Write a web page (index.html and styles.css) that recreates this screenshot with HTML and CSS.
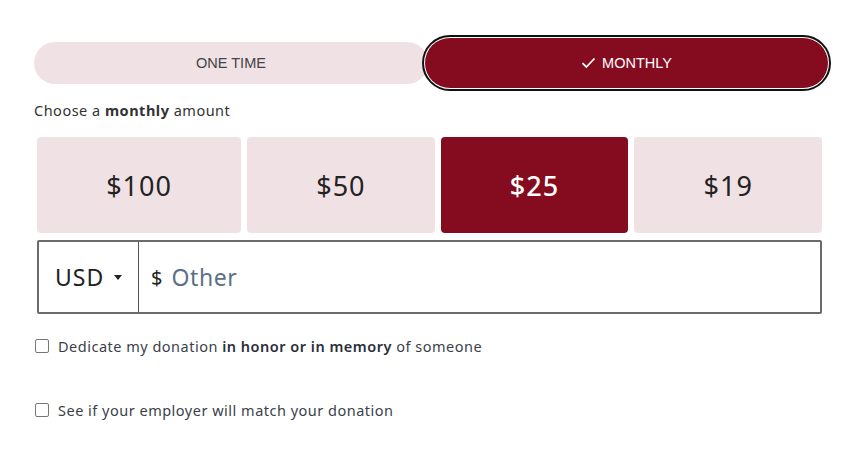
FILE: index.html
```html
<!DOCTYPE html>
<html lang="en">

<head>
    <meta charset="UTF-8">
    <meta name="viewport" content="width=device-width, initial-scale=1.0">
    <title>Donate</title>
    <link rel="stylesheet" href="styles.css">
</head>

<body>
    <div class="donate">
        <div class="freq">
            <button class="freq_btn one_time">ONE TIME</button>
            <button class="freq_btn monthly">
                <svg width="15" height="12" viewBox="0 0 15 12"><path d="M1.5 6.2 L5.3 10 L13.5 1.5" fill="none" stroke="#fff" stroke-width="1.8"/></svg>
                MONTHLY
            </button>
        </div>

        <p class="prompt">Choose a <b>monthly</b> amount</p>

        <div class="amounts">
            <button class="amount">$100</button>
            <button class="amount">$50</button>
            <button class="amount selected">$25</button>
            <button class="amount">$19</button>
        </div>

        <div class="other">
            <div class="currency">USD <span class="caret"></span></div>
            <div class="field">
                <span class="sign">$</span>
                <input type="text" placeholder="Other">
            </div>
        </div>

        <label class="check first"><span class="box"></span><span>Dedicate my donation <b>in honor or in memory</b> of someone</span></label>
        <label class="check second"><span class="box"></span><span>See if your employer will match your donation</span></label>
    </div>
</body>

</html>
```

FILE: styles.css
```css
body {
    margin: 0;
    background: #fff;
    font-family: "Noto Sans", "Lato", sans-serif;
    color: #333;
}

.donate {
    padding: 35px 0 0 34px;
    width: 797px;
}

.freq {
    display: flex;
    align-items: center;
    height: 56px;
    width: 795px;
}

.freq_btn {
    font-family: "Liberation Sans", Arial, sans-serif;
    font-size: 14.5px;
    border: none;
    cursor: pointer;
}

.one_time {
    flex: 1;
    height: 42px;
    border-radius: 21px;
    background: #f0e1e4;
    color: #444;
}

.monthly {
    width: 405px;
    height: 52px;
    margin-left: -4px;
    border-radius: 26px;
    background: #850b1f;
    color: #fff;
    border: 1px solid #fff;
    outline: 2px solid #111;
    display: flex;
    align-items: center;
    justify-content: center;
    gap: 6px;
}

.prompt {
    margin: 9px 0 0 0;
    font-size: 14.5px;
    letter-spacing: 0.5px;
    line-height: 20px;
}

.amounts {
    display: flex;
    gap: 6px;
    margin: 17px 9px 0 3px;
}

.amount {
    flex: 1 1 auto;
    height: 96px;
    border: none;
    border-radius: 4px;
    background: #f0e1e4;
    color: #222;
    font-family: "Noto Sans", "Lato", sans-serif;
    font-size: 27px;
    letter-spacing: 1px;
    cursor: pointer;
}

.amount.selected {
    background: #850b1f;
    color: #fff;
    font-weight: 500;
}

.other {
    display: flex;
    height: 70px;
    margin: 7px 9px 0 3px;
    border: 2px solid #6b6b6b;
    border-radius: 2px;
}

.currency {
    width: 83px;
    padding-left: 16px;
    display: flex;
    align-items: center;
    gap: 10px;
    font-size: 23px;
    letter-spacing: 1px;
    color: #222;
    border-right: 1px solid #555;
}

.caret {
    width: 0;
    height: 0;
    border-left: 4px solid transparent;
    border-right: 4px solid transparent;
    border-top: 5px solid #222;
}

.field {
    flex: 1;
    display: flex;
    align-items: center;
    padding-left: 12px;
    gap: 9px;
}

.sign {
    font-size: 20px;
    color: #222;
}

.field input {
    flex: 1;
    border: none;
    outline: none;
    font-family: "Noto Sans", "Lato", sans-serif;
    font-size: 23px;
    letter-spacing: 0.6px;
    padding: 0;
    color: #222;
}

.field input::placeholder {
    color: #5d6f87;
}

.check {
    display: flex;
    align-items: center;
    gap: 9px;
    font-size: 14.5px;
    letter-spacing: 0.5px;
    line-height: 20px;
    color: #3a3f4a;
    cursor: pointer;
}

.check b {
    color: #2a2e38;
    font-weight: 600;
}

.check.first {
    margin-top: 22px;
}

.check.second {
    margin-top: 44px;
}

.box {
    width: 12px;
    height: 12px;
    margin-left: 1px;
    border: 1px solid #777;
    border-radius: 2px;
    background: #fff;
}
```
